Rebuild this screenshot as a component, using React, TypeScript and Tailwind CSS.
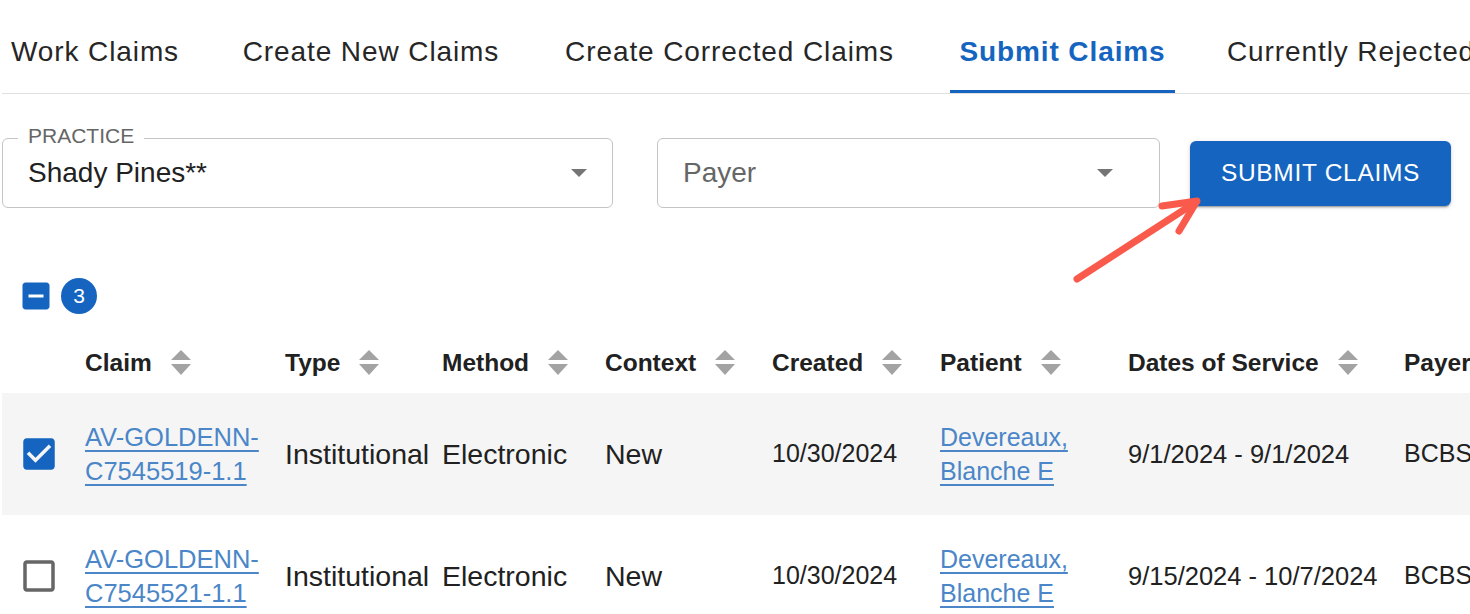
import React from "react"

const tabs = [
  { label: "Work Claims", w: "w-[186px] justify-center" },
  { label: "Create New Claims", w: "w-[276px] justify-center" },
  { label: "Create Corrected Claims", w: "w-[351px] justify-center" },
  { label: "Submit Claims", w: "w-[225px] justify-center", active: true },
  { label: "Currently Rejected Claims", w: "pl-[7px]" },
]

const columns = ["Claim", "Type", "Method", "Context", "Created", "Patient", "Dates of Service", "Payer"]

const rows = [
  {
    claim: "AV-GOLDENN-C7545519-1.1",
    checked: true,
    dates: "9/1/2024 - 9/1/2024",
  },
  {
    claim: "AV-GOLDENN-C7545521-1.1",
    checked: false,
    dates: "9/15/2024 - 10/7/2024",
  },
]

const grid = "grid grid-cols-[83px_200px_157px_163px_167px_168px_188px_276px_1fr]"

function SortIcon() {
  return (
    <svg width="20" height="26" viewBox="0 0 20 26" className="shrink-0">
      <path d="M10 0 L20 10 H0 Z" fill="#a3a3a3" />
      <path d="M0 14 H20 L10 25 Z" fill="#a3a3a3" />
    </svg>
  )
}

function DropTriangle() {
  return (
    <svg width="16" height="8" viewBox="0 0 16 8" className="shrink-0">
      <path d="M0 0 H16 L8 8 Z" fill="#757575" />
    </svg>
  )
}

function Checkbox({ checked }: { checked: boolean }) {
  return checked ? (
    <svg width="42" height="42" viewBox="0 0 24 24">
      <path
        fill="#1565c0"
        d="M19 3H5c-1.11 0-2 .9-2 2v14c0 1.1.89 2 2 2h14c1.11 0 2-.9 2-2V5c0-1.1-.89-2-2-2zm-9 14l-5-5 1.41-1.41L10 14.17l7.59-7.59L19 8l-9 9z"
      />
    </svg>
  ) : (
    <svg width="42" height="42" viewBox="0 0 24 24">
      <path
        fill="#666666"
        d="M19 5v14H5V5h14m0-2H5c-1.1 0-2 .9-2 2v14c0 1.1.9 2 2 2h14c1.1 0 2-.9 2-2V5c0-1.1-.9-2-2-2z"
      />
    </svg>
  )
}

export default function App() {
  return (
    <div
      className="relative h-[614px] w-full overflow-hidden bg-white pl-[2px] text-[#212121]"
      style={{ fontFamily: '"Liberation Sans", Arial, sans-serif' }}
    >
      {/* tabs */}
      <div className="flex h-[94px] gap-[45px] overflow-hidden whitespace-nowrap border-b border-[#e0e0e0]">
        {tabs.map((t) => (
          <div
            key={t.label}
            className={`relative flex shrink-0 pt-[35px] text-[28px] leading-[34px] tracking-[0.9px] ${t.w} ${
              t.active ? "font-bold text-[#1565c0]" : "text-[#262626]"
            }`}
          >
            {t.label}
            {t.active && <span className="absolute -bottom-[2px] left-0 h-[5px] w-full bg-[#1565c0]" />}
          </div>
        ))}
      </div>

      {/* filters */}
      <div className="mt-[44px] flex items-center">
        <div className="relative flex h-[70px] w-[611px] items-center rounded-[6px] border border-[#c4c4c4] pl-[25px] pr-[25px]">
          <span className="absolute -top-[14px] left-[15px] bg-white px-[10px] text-[21px] leading-[21px] text-[#666]">
            PRACTICE
          </span>
          <span className="flex-1 text-[28px] leading-[34px]">Shady Pines**</span>
          <DropTriangle />
        </div>
        <div className="ml-[44px] flex h-[70px] w-[503px] items-center rounded-[6px] border border-[#c4c4c4] pl-[25px] pr-[46px]">
          <span className="flex-1 text-[28px] leading-[34px] text-[#666]">Payer</span>
          <DropTriangle />
        </div>
        <button className="ml-[30px] flex h-[65px] w-[261px] items-center justify-center rounded-[6px] bg-[#1565c0] text-[24.5px] tracking-[0.7px] text-white shadow-[0_3px_1px_-2px_rgba(0,0,0,0.2),0_2px_2px_0_rgba(0,0,0,0.14),0_1px_5px_0_rgba(0,0,0,0.12)]">
          SUBMIT CLAIMS
        </button>
      </div>

      {/* selection summary */}
      <div className="mt-[70px] flex h-[36px] items-center">
        <svg width="36" height="36" viewBox="0 0 24 24" className="ml-[15.5px]">
          <path
            fill="#1565c0"
            d="M19 3H5c-1.1 0-2 .9-2 2v14c0 1.1.9 2 2 2h14c1.1 0 2-.9 2-2V5c0-1.1-.9-2-2-2zm-2 10H7v-2h10v2z"
          />
        </svg>
        <span className="ml-[7.5px] flex h-[36px] w-[36px] items-center justify-center rounded-full bg-[#1565c0] text-[21px] text-white">
          3
        </span>
      </div>

      {/* table header */}
      <div className={`${grid} mt-[19px] h-[60px] items-center`}>
        <div />
        {columns.map((c) => (
          <div key={c} className="flex items-center gap-[19px] whitespace-nowrap text-[24.5px] font-bold">
            {c}
            <SortIcon />
          </div>
        ))}
      </div>

      {/* rows */}
      {rows.map((r) => (
        <div
          key={r.claim}
          className={`${grid} h-[122px] items-center whitespace-nowrap ${r.checked ? "bg-[#f5f5f5]" : ""}`}
        >
          <div className="pl-[16px]">
            <Checkbox checked={r.checked} />
          </div>
          <a className="w-[195px] whitespace-normal text-[25.5px] leading-[34px] text-[#4a86c8] underline decoration-2 underline-offset-[4px]">
            {r.claim}
          </a>
          <div className="text-[28.5px]">Institutional</div>
          <div className="text-[28.5px]">Electronic</div>
          <div className="text-[28.5px]">New</div>
          <div className="text-[25px]">10/30/2024</div>
          <a className="w-[170px] whitespace-normal text-[25px] leading-[34px] text-[#4a86c8] underline decoration-2 underline-offset-[4px]">
            Devereaux, Blanche E
          </a>
          <div className="text-[25.5px]">{r.dates}</div>
          <div className="text-[25px]">BCBS</div>
        </div>
      ))}

      {/* annotation arrow */}
      <svg
        width="135"
        height="92"
        viewBox="0 0 135 92"
        className="pointer-events-none absolute left-[1070px] top-[195px]"
      >
        <g stroke="#fa5a4b" strokeWidth="7" strokeLinecap="round" strokeLinejoin="round" fill="none">
          <path d="M7 84 L126 7" />
          <path d="M92 11 L127 6 L109 36" />
        </g>
      </svg>
    </div>
  )
}
